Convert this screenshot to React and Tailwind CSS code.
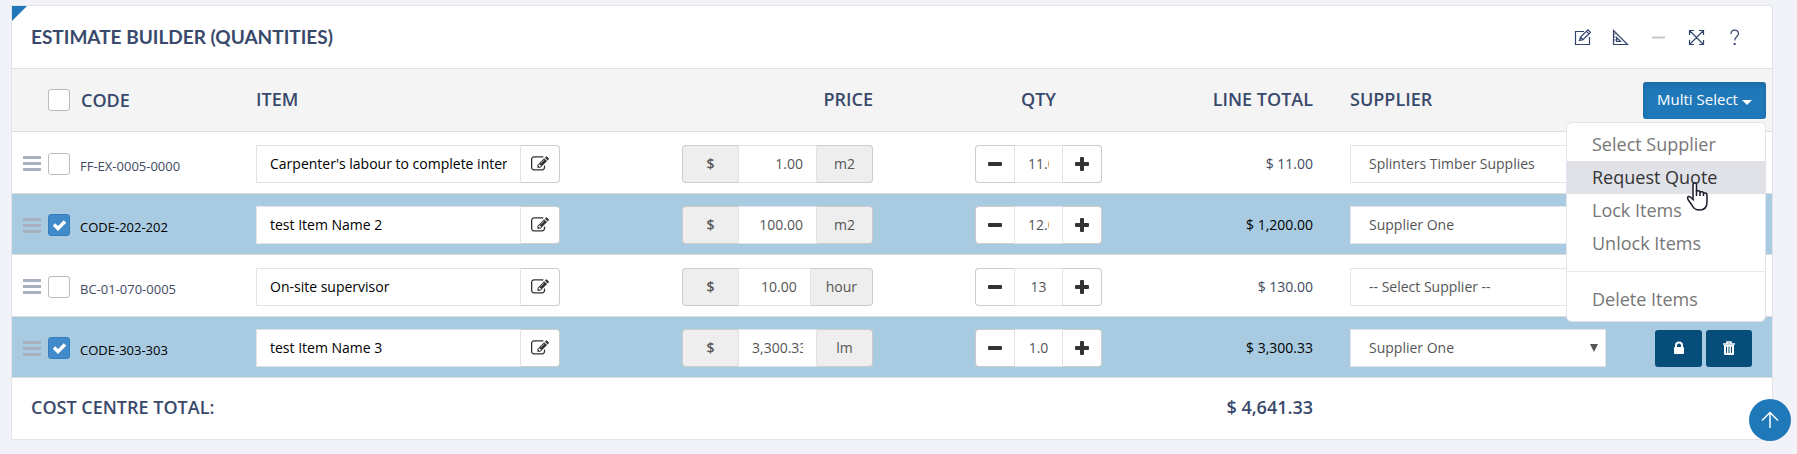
import { useState } from "react";

const suppliers = ["-- Select Supplier --", "Splinters Timber Supplies", "Supplier One"];

const initialItems = [
  { id: 1, code: "FF-EX-0005-0000", name: "Carpenter's labour to complete interior fitout", price: "1.00", unit: "m2", qty: "11.00", total: "11.00", supplier: "Splinters Timber Supplies", selected: false },
  { id: 2, code: "CODE-202-202", name: "test Item Name 2", price: "100.00", unit: "m2", qty: "12.00", total: "1,200.00", supplier: "Supplier One", selected: true },
  { id: 3, code: "BC-01-070-0005", name: "On-site supervisor", price: "10.00", unit: "hour", qty: "13", total: "130.00", supplier: "-- Select Supplier --", selected: false },
  { id: 4, code: "CODE-303-303", name: "test Item Name 3", price: "3,300.33", unit: "lm", qty: "1.0", total: "3,300.33", supplier: "Supplier One", selected: true },
];

const EditIcon = () => (
  <svg viewBox="0 0 1792 1792" className="w-[18px] h-[18px]" fill="currentColor">
    <path d="M888 1184l116-116-152-152-116 116v56h96v96h56zm440-720q-16-16-33 1l-350 350q-17 17-1 33t33-1l350-350q17-17 1-33zm80 594v190q0 119-84.5 203.5t-203.5 84.5h-832q-119 0-203.5-84.5t-84.5-203.5v-832q0-119 84.5-203.5t203.5-84.5h832q63 0 117 25 15 7 18 23 3 17-9 29l-49 49q-14 14-32 8-23-6-45-6h-832q-66 0-113 47t-47 113v832q0 66 47 113t113 47h832q66 0 113-47t47-113v-126q0-13 9-22l64-64q15-15 35-7t20 29zm-96-738l288 288-672 672h-288v-288zm444 132l-92 92-288-288 92-92q28-28 68-28t68 28l152 152q28 28 28 68t-28 68z" />
  </svg>
);

const MinusIcon = () => (
  <svg viewBox="0 0 14 14" className="w-[14px] h-[14px]" fill="currentColor"><rect y="5" width="14" height="4" rx="1" /></svg>
);

const PlusIcon = () => (
  <svg viewBox="0 0 14 14" className="w-[14px] h-[14px]" fill="currentColor">
    <rect y="5" width="14" height="4" rx="1" />
    <rect x="5" width="4" height="14" rx="1" />
  </svg>
);

const LockIcon = () => (
  <svg viewBox="0 0 12 14" className="w-3 h-[14px]" fill="none">
    <rect x="1" y="6" width="10" height="7" rx="1" fill="currentColor" />
    <path d="M3 7V4.5a3 3 0 0 1 6 0V7" stroke="currentColor" strokeWidth="2" />
  </svg>
);

const TrashIcon = () => (
  <svg viewBox="0 0 12 14" className="w-3 h-[14px]" fill="none" stroke="currentColor">
    <path d="M0 3h12M4 2.5V1h4v1.5" strokeWidth="1.5" />
    <path d="M1 4h10v9a1 1 0 0 1-1 1H2a1 1 0 0 1-1-1z" fill="currentColor" stroke="none" />
    <path d="M3.5 5.5v6.5M6 5.5v6.5M8.5 5.5v6.5" stroke="#074d79" />
  </svg>
);

const toolIcons = [
  { label: "Edit", icon: <><path d="M10 2.5H1.5v13h14V8" /><path d="M5.5 11.5l1-3.500L14 .8l2.500 2.500L9 10.7zM12.5 2.3l2.500 2.500M6.5 8L9 10.7" /></> },
  { label: "Measure", icon: <><path d="M1.500 1.5v14h14z" /><path d="M4.5 8.5v4h4zM1.500 5h2M1.5 8h2M1.5 11h2" /></> },
  { label: "Collapse", muted: true, icon: <path d="M2 8.5h13" strokeWidth="2" /> },
  { label: "Full screen", icon: <path d="M1.5 1.5l14 14M15.5 1.5l-14 14M1.5 6V1.5H6M11 1.5h4.5V6M15.5 11v4.5H11M6 15.5H1.5V11" /> },
  { label: "Help", icon: <><path d="M5 5c0-5 7.5-5 7.5-.5 0 3-3.8 3-3.8 7" /><path d="M8.7 14v2" strokeWidth="2" /></> },
];

const Checkbox = ({ label, checked, onChange }) => (
  <span className="relative flex shrink-0 size-[22px]">
    <input
      type="checkbox"
      aria-label={label}
      checked={checked}
      onChange={onChange}
      className="peer appearance-none size-[22px] rounded-[3px] border border-[#bbb] bg-white checked:bg-[#428bca] checked:border-[#357ebd]"
    />
    <svg viewBox="0 0 22 22" className="absolute inset-0 hidden peer-checked:block pointer-events-none" fill="none" stroke="#fff" strokeWidth="3.5">
      <path d="M6 10.5l4 4 7-7" />
    </svg>
  </span>
);

const ItemRow = ({ item, onToggle, onChange }) => {
  const stepQty = (n) => onChange(item.id, "qty", String(Math.max(0, parseFloat(item.qty) + n)));

  return (
    <tr className={`border-t border-[#ddd] odd:h-[62px] even:h-[61px] ${item.selected ? "bg-[#a9cbe1] text-black" : ""}`}>
      <td className="pt-[2px] pl-[11px]">
        <div className="flex items-center">
          <span className="flex flex-col gap-[3px] w-[18px] mr-[7px] cursor-move">
            <span className="h-[3px] bg-[#a9b1bf]" />
            <span className="h-[3px] bg-[#a9b1bf]" />
            <span className="h-[3px] bg-[#a9b1bf]" />
          </span>
          <Checkbox label={`Select ${item.code}`} checked={item.selected} onChange={() => onToggle(item.id)} />
          <span className="pl-[10px] pt-[6px] text-[13px]">{item.code}</span>
        </div>
      </td>
      <td className="pt-[2px] px-[18px]">
        <div className="flex h-[38px]">
          <input aria-label="Item name" value={item.name} onChange={(e) => onChange(item.id, "name", e.target.value)} className="w-[265px] px-[13px] bg-white border border-[#e2e3e6] text-sm text-black" />
          <button aria-label="Edit item" className="flex items-center justify-center w-[39px] bg-white border border-l-0 border-[#ccc] rounded-r text-[#333]"><EditIcon /></button>
        </div>
      </td>
      <td className="pt-[2px] px-[18px]">
        <div className="flex h-[38px] text-[#555] text-sm">
          <span className="flex items-center justify-center w-14 shrink-0 bg-[#eee] border border-r-0 border-[#ccc] rounded-l font-semibold">$</span>
          <input aria-label="Price" value={item.price} onChange={(e) => onChange(item.id, "price", e.target.value)} className="grow min-w-0 w-0 px-[13px] bg-white border border-[#e2e3e6] text-right" />
          <span className="flex items-center justify-center min-w-14 px-[15px] bg-[#eee] border border-l-0 border-[#ccc] rounded-r">{item.unit}</span>
        </div>
      </td>
      <td className="pt-[2px]">
        <div className="flex justify-center h-[38px] text-[#333]">
          <button aria-label="Decrease quantity" onClick={() => stepQty(-1)} className="flex items-center justify-center w-[39px] bg-white border border-r-0 border-[#ccc] rounded-l"><MinusIcon /></button>
          <input aria-label="Quantity" value={item.qty} onChange={(e) => onChange(item.id, "qty", e.target.value)} className="w-[49px] px-[13px] bg-white border border-[#e2e3e6] text-sm text-[#555] text-center" />
          <button aria-label="Increase quantity" onClick={() => stepQty(1)} className="flex items-center justify-center w-[39px] bg-white border border-l-0 border-[#ccc] rounded-r"><PlusIcon /></button>
        </div>
      </td>
      <td className="pt-[2px] pr-[19px] text-right text-sm">$ {item.total}</td>
      <td className="pt-[2px] px-[18px]">
        <div className="relative">
          <select aria-label="Supplier" value={item.supplier} onChange={(e) => onChange(item.id, "supplier", e.target.value)} className="appearance-none block w-full h-[38px] px-[18px] bg-white border border-[#e2e3e6] text-sm text-[#555]">
            {suppliers.map((s) => <option key={s}>{s}</option>)}
          </select>
          <svg viewBox="0 0 8 8" className="absolute right-2 top-[15px] size-2 pointer-events-none" fill="#555"><path d="M0 0h8L4 8z" /></svg>
        </div>
      </td>
      <td className="pt-[2px] pr-5">
        <div className="flex justify-end gap-1 text-white">
          <button aria-label="Lock item" className="flex items-center justify-center w-[47px] h-[37px] bg-[#074d79] rounded-[3px]"><LockIcon /></button>
          <button aria-label="Delete item" className="flex items-center justify-center w-[46px] h-[37px] bg-[#074d79] rounded-[3px]"><TrashIcon /></button>
        </div>
      </td>
    </tr>
  );
};

const menuItem = "block w-full h-[33px] px-[25px] text-left hover:bg-[#e1e2e8] hover:text-[#333]";

const MultiSelect = () => {
  const [open, setOpen] = useState(true);

  return (
    <div className="relative inline-block text-left font-normal">
      <button onClick={() => setOpen(!open)} className="flex items-center justify-center gap-1 w-[123px] h-[37px] bg-[#1f78b8] rounded-[3px] shadow-[inset_0_3px_5px_rgba(0,0,0,0.125)] text-[15px] text-white">
        Multi Select
        <svg viewBox="0 0 10 5" className="w-[10px] h-[5px] mt-1" fill="currentColor"><path d="M0 0h10L5 5z" /></svg>
      </button>
      {open && (
        <div className="absolute z-10 right-0 top-10 w-[200px] py-[5px] bg-white border border-[#e1e3ee] rounded-md text-lg text-[#777]">
          <button className={menuItem}>Select Supplier</button>
          <button className="block w-full h-[33px] px-[25px] text-left bg-[#e1e2e8] text-[#333]">Request Quote</button>
          <button className={menuItem}>Lock Items</button>
          <button className={menuItem}>Unlock Items</button>
          <hr className="my-[11px] border-[#e7e8ec]" />
          <button className={menuItem}>Delete Items</button>
          {/* Pointer */}
          <svg viewBox="0 0 22 29" className="absolute left-[119px] top-[59px] w-[22px] h-[29px] pointer-events-none" fill="#fff" stroke="#1b1b2b" strokeWidth="1.5" strokeLinejoin="round">
            <path d="M7 17V3q0-2 1.800-2t1.700 2v6q3-1 3.500 1 3-1 3.500 1 3.500-.5 3.500 2V20q0 8-7.500 8-5 0-7-4l-4.500-6.500q-1-2.500.5-3t5 3.500z" />
            <path d="M10.500 8v6M14 9.5V14M17.500 10.5V14" fill="none" />
          </svg>
        </div>
      )}
    </div>
  );
};

const App = () => {
  const [items, setItems] = useState(initialItems);

  const toggle = (id) => setItems((p) => p.map((i) => (i.id === id ? { ...i, selected: !i.selected } : i)));
  const change = (id, key, value) => setItems((p) => p.map((i) => (i.id === id ? { ...i, [key]: value } : i)));
  const allSelected = items.every((i) => i.selected);
  const toggleAll = () => setItems((p) => p.map((i) => ({ ...i, selected: !allSelected })));

  return (
    <div className="min-h-screen bg-[#f1f3f8] pt-[5px] pl-[11px] pr-6 pb-[14px] font-['Open_Sans',sans-serif] text-[#3f4a63]">
      <div className="relative bg-white border border-[#e1e3ee] rounded-r">
        <span className="absolute left-0 top-0 size-[15px] bg-[#1f78b8] [clip-path:polygon(0_0,100%_0,0_100%)]" />

        {/* Panel heading */}
        <div className="flex items-center justify-between h-[62px] pl-[19px] pr-[29px]">
          <h1 className="font-['Lato',sans-serif] text-[19px] font-bold text-[#39496b]">ESTIMATE BUILDER (QUANTITIES)</h1>
          <div className="flex gap-[21px]">
            {toolIcons.map((t) => (
              <button key={t.label} aria-label={t.label} className={t.muted ? "text-[#c5c6cb]" : "text-[#34456b]"}>
                <svg viewBox="0 0 17 17" className="size-[17px]" fill="none" stroke="currentColor" strokeWidth="1.2">{t.icon}</svg>
              </button>
            ))}
          </div>
        </div>

        {/* Items */}
        <table className="w-full table-fixed">
          <colgroup>
            <col className="w-[226px]" />
            <col />
            <col className="w-[227px]" />
            <col className="w-[295px]" />
            <col className="w-[146px]" />
            <col className="w-[292px]" />
            <col className="w-[148px]" />
          </colgroup>
          <thead className="bg-[#f4f4f4] border-t border-[#e1e1e4] text-lg text-[#39496b]">
            <tr className="h-[63px]">
              <th className="pl-9">
                <div className="flex items-center gap-[11px] font-semibold">
                  <Checkbox label="Select all" checked={allSelected} onChange={toggleAll} />
                  CODE
                </div>
              </th>
              <th className="pb-[3px] px-[18px] text-left font-semibold">ITEM</th>
              <th className="pb-[3px] px-[18px] text-right font-semibold">PRICE</th>
              <th className="pb-[3px] font-semibold">QTY</th>
              <th className="pb-[3px] pr-[19px] text-right font-semibold">LINE TOTAL</th>
              <th className="pb-[3px] px-[18px] text-left font-semibold">SUPPLIER</th>
              <th className="pr-[6px] text-right"><MultiSelect /></th>
            </tr>
          </thead>
          <tbody>
            {items.map((item) => <ItemRow key={item.id} item={item} onToggle={toggle} onChange={change} />)}
          </tbody>
          <tfoot className="border-t border-[#ddd] text-lg text-[#39496b]">
            <tr className="h-[61px]">
              <th colSpan={4} className="pb-[3px] pl-[19px] text-left font-semibold">COST CENTRE TOTAL:</th>
              <td className="pb-[3px] pr-[19px] text-right font-semibold">$ 4,641.33</td>
              <td colSpan={2} />
            </tr>
          </tfoot>
        </table>
      </div>

      <a href="#root" aria-label="Back to top" className="fixed right-[6px] bottom-[13px] flex items-center justify-center size-[42px] rounded-full bg-[#1f78b8] text-white">
        <svg viewBox="0 0 18 18" className="size-[18px]" fill="none" stroke="currentColor" strokeWidth="1.5"><path d="M9 17V1.5M1 9.5l8-8 8 8" /></svg>
      </a>
    </div>
  );
};

export default App;
